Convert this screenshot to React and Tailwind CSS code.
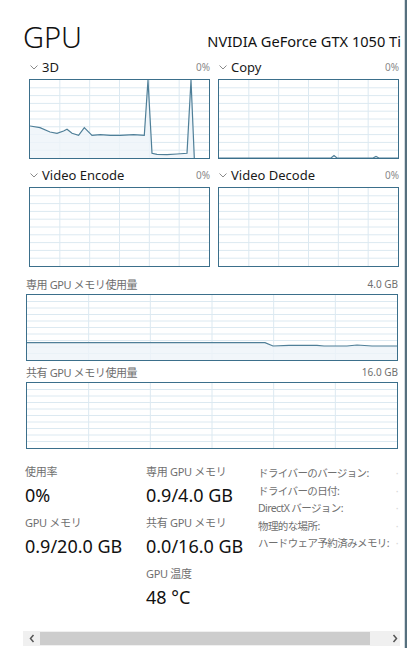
import React from 'react';

const FONT = { fontFamily: '"Noto Sans", "Noto Sans CJK JP", sans-serif' };

const Chevron = () => (
  <svg width="8" height="5" viewBox="0 0 8 5" className="shrink-0">
    <path d="M0.5 0.5 L4 4 L7.5 0.5" fill="none" stroke="#8a8a8a" strokeWidth="1" />
  </svg>
);

// grid + optional usage line, drawn inside a bordered box
const Chart = ({ w, h, cols, rows, points }) => {
  const v = [];
  for (let i = 1; i < cols; i++) v.push((w / cols) * i);
  const hz = [];
  for (let i = 1; i < rows; i++) hz.push((h / rows) * i);
  const line = points ? points.map((p) => p.join(',')).join(' ') : null;
  const area = points ? `0,${h} ${line} ${w},${h}` : null;
  return (
    <svg width={w} height={h} viewBox={`0 0 ${w} ${h}`} className="block">
      {hz.map((y) => (
        <line key={'h' + y} x1="0" x2={w} y1={y} y2={y} stroke="#dce9f1" strokeWidth="1" />
      ))}
      {v.map((x) => (
        <line key={'v' + x} x1={x} x2={x} y1="0" y2={h} stroke="#dce9f1" strokeWidth="1" />
      ))}
      {points && <polygon points={area} fill="#edf4f9" fillOpacity="0.8" />}
      {points && <polyline points={line} fill="none" stroke="#4f7f98" strokeWidth="1.2" />}
    </svg>
  );
};

const SmallGraph = ({ label, points }) => (
  <div className="w-[181px]">
    <div className="flex items-center h-[14px] text-[13px] text-[#1a1a1a]">
      <span className="ml-[1px] mr-[4px]"><Chevron /></span>
      <span className="leading-none">{label}</span>
      <span className="ml-auto text-[10px] text-[#8a8a8a] leading-none">0%</span>
    </div>
    <div className="mt-[5px] border border-[#3b6f8b] w-[181px] h-[80px]">
      <Chart w={179} h={78} cols={6} rows={10} points={points} />
    </div>
  </div>
);

const MemGraph = ({ label, value, points }) => (
  <div className="w-[372px]">
    <div className="flex items-center h-[14px] text-[11px] text-[#6e6e6e]">
      <span className="leading-none tracking-[-0.4px]">{label}</span>
      <span className="ml-auto text-[10px] text-[#707070] leading-none">{value}</span>
    </div>
    <div className="mt-[3px] border border-[#3b6f8b] w-[372px] h-[67px]">
      <Chart w={370} h={65} cols={6} rows={10} points={points} />
    </div>
  </div>
);

const Stat = ({ label, value }) => (
  <div>
    <div className="text-[11px] text-[#707070] leading-[14px] tracking-[-0.3px]">{label}</div>
    <div className="text-[18px] text-[#111] leading-[24px] mt-[4px] whitespace-nowrap">{value}</div>
  </div>
);

const pts3d = [
  [0, 46], [10, 47.6], [20, 52], [27, 53.3], [33.6, 51], [37, 49.3], [42, 53.3], [48.6, 55.3],
  [54.3, 47.6], [62, 55.3], [70.3, 54.6], [80.3, 55.3], [90.3, 55.3], [103.6, 54.6], [114.3, 55.3],
  [118, 0], [122, 73.3], [127, 74.3], [137, 74.6], [147, 74], [157, 73.3], [161, 0], [164.3, 78],
];

const ptsCopy = [
  [0, 78], [112, 78], [115, 75.5], [118, 78], [154, 78], [157, 76.5], [160, 78], [179, 78],
];

const ptsDedicated = [
  [0, 47.7], [238, 47.7], [246, 51], [262, 50.3], [290, 50.3], [297, 51], [320, 51], [330, 50],
  [345, 51], [370, 51],
];

export default function App() {
  return (
    <div className="w-[407px] h-[648px] bg-white flex overflow-hidden" style={FONT}>
      <div className="flex-1 min-w-0 flex flex-col">
        {/* Header */}
        <div className="flex items-end justify-between pl-[23px] pr-[3px] pt-[19px] h-[51px]">
          <span className="text-[29px] leading-none font-light text-[#111]">GPU</span>
          <span className="text-[14.6px] leading-none text-[#111] mb-[2px] whitespace-nowrap">NVIDIA GeForce GTX 1050 Ti</span>
        </div>

        {/* Engine graphs */}
        <div className="pl-[29px] mt-[9px] grid grid-cols-[181px_181px] gap-x-[8px] gap-y-[9px]">
          <SmallGraph label="3D" points={pts3d} />
          <SmallGraph label="Copy" points={ptsCopy} />
          <SmallGraph label="Video Encode" />
          <SmallGraph label="Video Decode" />
        </div>

        {/* Memory graphs */}
        <div className="pl-[26px] mt-[10px] flex flex-col gap-[4px]">
          <MemGraph label="専用 GPU メモリ使用量" value="4.0 GB" points={ptsDedicated} />
          <MemGraph label="共有 GPU メモリ使用量" value="16.0 GB" />
        </div>

        {/* Stats */}
        <div className="pl-[25px] mt-[16px] flex">
          <div className="w-[121px] shrink-0 flex flex-col gap-[9px]">
            <Stat label="使用率" value="0%" />
            <Stat label="GPU メモリ" value="0.9/20.0 GB" />
          </div>
          <div className="w-[112px] shrink-0 flex flex-col gap-[9px]">
            <Stat label="専用 GPU メモリ" value="0.9/4.0 GB" />
            <Stat label="共有 GPU メモリ" value="0.0/16.0 GB" />
            <Stat label="GPU 温度" value="48 °C" />
          </div>
          <div className="flex-1 min-w-0 overflow-hidden flex flex-col text-[10.5px] tracking-[-0.6px] text-[#707070] leading-[17.6px] pr-[6px]">
            {['ドライバーのバージョン:', 'ドライバーの日付:', 'DirectX バージョン:', '物理的な場所:', 'ハードウェア予約済みメモリ:'].map((t) => (
              <div key={t} className="flex whitespace-nowrap">
                <span>{t}</span>
                <span className="ml-auto text-[#d8d8d8]">·</span>
              </div>
            ))}
          </div>
        </div>

        <div className="flex-1" />

        {/* Horizontal scrollbar */}
        <div className="ml-[23px] mr-[4px] mb-[2px] h-[15px] bg-[#f0f0f0] flex items-center">
          <div className="w-[17px] flex justify-center">
            <svg width="6" height="9" viewBox="0 0 6 9">
              <path d="M4.5 1 L1.5 4.5 L4.5 8" fill="none" stroke="#555" strokeWidth="1.5" />
            </svg>
          </div>
          <div className="h-[13px] flex-1 bg-[#cdcdcd]" />
          <div className="w-[30px] flex justify-end pr-[2px]">
            <svg width="6" height="9" viewBox="0 0 6 9">
              <path d="M1.5 1 L4.5 4.5 L1.5 8" fill="none" stroke="#555" strokeWidth="1.5" />
            </svg>
          </div>
        </div>
      </div>
      <div className="w-px shrink-0 bg-[#d3dbe0]" />
      <div className="w-[2px] shrink-0 bg-[#56707e]" />
    </div>
  );
}
